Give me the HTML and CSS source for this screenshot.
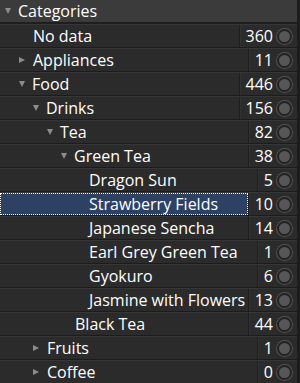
FILE: index.html
```html
<!DOCTYPE html>
<html>
<head>
<meta charset="utf-8">
<link rel="stylesheet" href="styles.css">
</head>
<body>
<div class="tree">
  <div class="header"><span class="tri down"></span><span class="label">Categories</span></div>
  <div class="row l0"><span class="name">No data</span><span class="num">360</span><span class="dot"></span></div>
  <div class="row l0"><span class="name"><span class="tri right"></span>Appliances</span><span class="num">11</span><span class="dot"></span></div>
  <div class="row l0"><span class="name"><span class="tri down"></span>Food</span><span class="num">446</span><span class="dot"></span></div>
  <div class="row l1"><span class="name"><span class="tri down"></span>Drinks</span><span class="num">156</span><span class="dot"></span></div>
  <div class="row l2"><span class="name"><span class="tri down"></span>Tea</span><span class="num">82</span><span class="dot"></span></div>
  <div class="row l3"><span class="name"><span class="tri down"></span>Green Tea</span><span class="num">38</span><span class="dot"></span></div>
  <div class="row l4"><span class="name">Dragon Sun</span><span class="num">5</span><span class="dot"></span></div>
  <div class="row l4 sel"><span class="name">Strawberry Fields</span><span class="num">10</span><span class="dot"></span></div>
  <div class="row l4"><span class="name">Japanese Sencha</span><span class="num">14</span><span class="dot"></span></div>
  <div class="row l4"><span class="name">Earl Grey Green Tea</span><span class="num">1</span><span class="dot"></span></div>
  <div class="row l4"><span class="name">Gyokuro</span><span class="num">6</span><span class="dot"></span></div>
  <div class="row l4"><span class="name">Jasmine with Flowers</span><span class="num">13</span><span class="dot"></span></div>
  <div class="row l3"><span class="name">Black Tea</span><span class="num">44</span><span class="dot"></span></div>
  <div class="row l1"><span class="name"><span class="tri right"></span>Fruits</span><span class="num">1</span><span class="dot"></span></div>
  <div class="row l1"><span class="name"><span class="tri right"></span>Coffee</span><span class="num">0</span><span class="dot"></span></div>
</div>
</body>
</html>
```
FILE: styles.css
```css
html, body {
  margin: 0;
  padding: 0;
  background: #262626;
}
.tree {
  width: 297px;
  height: 383px;
  overflow: hidden;
  font-family: "Open Sans", "Noto Sans", sans-serif;
  font-size: 16px;
  color: #ffffff;
  background: #2b2b2b;
  border-right: 3px solid #1c1c1c;
}
.header {
  height: 22px;
  display: flex;
  align-items: center;
  background: #3b3b3b;
  border-bottom: 2px solid #1e1e1e;
  padding-left: 5px;
}
.header .tri { margin-right: 7px; }
.row {
  height: 22px;
  display: flex;
  align-items: center;
  border-top: 1px solid #363636;
  border-bottom: 1px solid #1c1c1c;
}
.name {
  flex: 1;
  height: 100%;
  display: flex;
  align-items: center;
  white-space: nowrap;
  box-sizing: border-box;
}
.l0 .name { padding-left: 33px; }
.l1 .name { padding-left: 47px; }
.l2 .name { padding-left: 61px; }
.l3 .name { padding-left: 75px; }
.l4 .name { padding-left: 89px; }
.name .tri { margin-left: -14px; margin-right: 7px; }
.tri {
  display: inline-block;
  width: 0;
  height: 0;
}
.tri.down {
  border-left: 3.5px solid transparent;
  border-right: 3.5px solid transparent;
  border-top: 6px solid #8c8c8c;
}
.tri.right {
  border-top: 3.5px solid transparent;
  border-bottom: 3.5px solid transparent;
  border-left: 6px solid #8c8c8c;
}
.name .tri.right { margin-right: 8px; margin-left: -14px; }
.num {
  height: 100%;
  display: flex;
  align-items: center;
  padding: 0 4px 0 6px;
  border-left: 1px solid #1e1e1e;
  box-shadow: inset 1px 0 0 #333;
}
.dot {
  width: 11px;
  height: 11px;
  border-radius: 50%;
  background: #565656;
  border: 2px solid #232323;
  box-shadow: 0 0 0 1px #505050;
  margin: 0 5px 0 0;
}
.sel .name {
  background: #2c4164;
  outline: 1px dotted #ffffff;
  outline-offset: -1px;
}
```
